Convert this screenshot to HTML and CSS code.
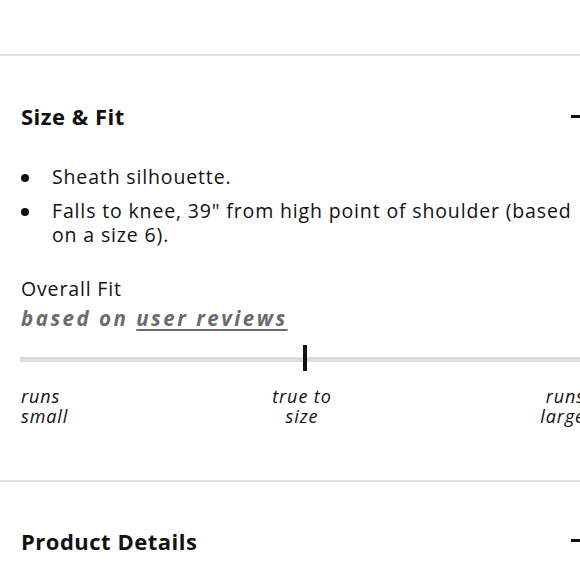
FILE: index.html
```html
<!DOCTYPE html>
<html lang="en">
<head>
<meta charset="utf-8">
<link rel="stylesheet" href="styles.css">
</head>
<body>
<div class="page">
  <section class="section">
    <div class="section-header">
      <h2 class="section-title">Size &amp; Fit</h2>
      <span class="toggle" aria-hidden="true"></span>
    </div>
    <ul class="bullets">
      <li>Sheath silhouette.</li>
      <li>Falls to knee, 39" from high point of shoulder (based on a size 6).</li>
    </ul>
    <div class="fit">
      <div class="fit-title">Overall Fit</div>
      <div class="fit-sub">based on <a href="#" class="fit-link">user reviews</a></div>
      <div class="track"><span class="marker"></span></div>
      <div class="scale">
        <span class="scale-label left">runs<br>small</span>
        <span class="scale-label center">true to<br>size</span>
        <span class="scale-label right">runs<br>large</span>
      </div>
    </div>
  </section>
  <section class="section last">
    <div class="section-header">
      <h2 class="section-title">Product Details</h2>
      <span class="toggle" aria-hidden="true"></span>
    </div>
  </section>
</div>
</body>
</html>
```
FILE: styles.css
```css
html, body {
  margin: 0;
  padding: 0;
  background: #fff;
  overflow: hidden;
}
body {
  font-family: "Open Sans", "Noto Sans", sans-serif;
  color: #111;
}
.page {
  width: 610px;
  padding: 54px 21px 0 21px;
  box-sizing: border-box;
}
.section {
  border-top: 2px solid #e2e2e2;
  margin: 0 -21px;
  padding: 0 21px 54px 21px;
}
.section.last {
  padding-bottom: 0;
}
.section-header {
  display: flex;
  justify-content: space-between;
  align-items: center;
  height: 36px;
  margin-top: 42px;
}
.section.last .section-header {
  margin-top: 41px;
}
.section-title {
  margin: 0;
  font-size: 22px;
  line-height: 36px;
  font-weight: 700;
  letter-spacing: 0.5px;
}
.toggle {
  display: block;
  width: 18px;
  height: 3px;
  background: #111;
}
.bullets {
  list-style: none;
  margin: 31px 0 0 0;
  padding: 0;
  font-size: 19.5px;
  line-height: 24.5px;
  letter-spacing: 0.85px;
}
.bullets li {
  position: relative;
  padding-left: 31px;
  margin-bottom: 9px;
}
.bullets li::before {
  content: "";
  position: absolute;
  left: 0;
  top: 9px;
  width: 8px;
  height: 8px;
  border-radius: 50%;
  background: #111;
}
.fit {
  margin-top: 29px;
  font-size: 19.5px;
  line-height: 24.5px;
  letter-spacing: 0.85px;
}
.fit-sub {
  margin-top: 5px;
  font-size: 20.5px;
  font-weight: 700;
  font-style: italic;
  color: #6b6b6b;
  letter-spacing: 2.5px;
}
.fit-link {
  color: #6b6b6b;
  text-decoration: underline;
  text-underline-offset: 3px;
  text-decoration-thickness: 2px;
}
.track {
  position: relative;
  height: 5px;
  background: #dedede;
  margin-top: 26px;
  margin-left: -1px;
}
.marker {
  position: absolute;
  left: 283px;
  top: -12px;
  width: 4px;
  height: 26px;
  background: #111;
}
.scale {
  display: grid;
  grid-template-columns: 1fr 1fr 1fr;
  margin-top: 24px;
  font-size: 18px;
  line-height: 20px;
  font-style: italic;
  letter-spacing: 0.9px;
}
.scale-label.left { text-align: left; }
.scale-label.center { text-align: center; padding-right: 6px; }
.scale-label.right { text-align: right; padding-right: 4px; }
```
